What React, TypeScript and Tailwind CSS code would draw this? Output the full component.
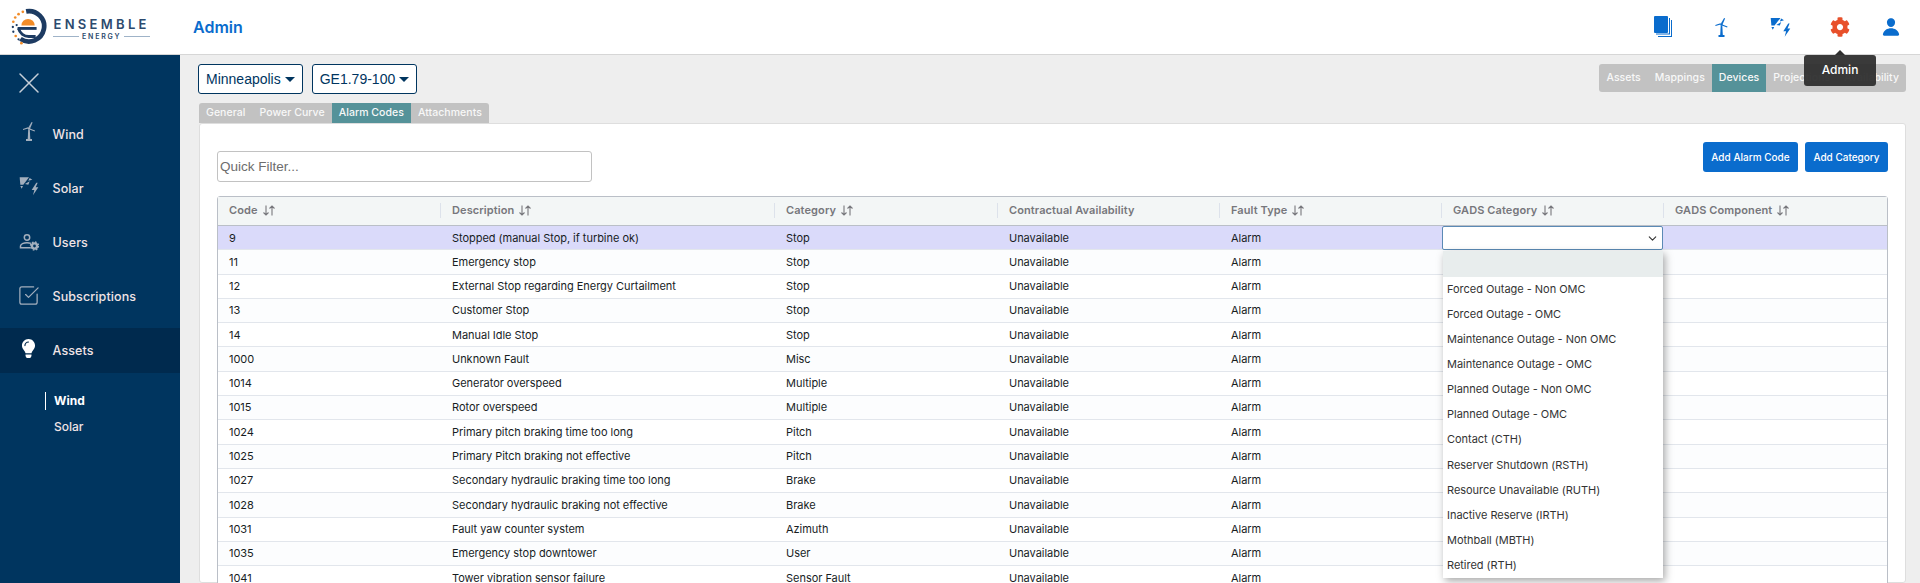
import { ChevronDown, SquareCheckBig, X } from 'lucide-react';
import { FaCog, FaLightbulb } from 'react-icons/fa';
import { IoPerson } from 'react-icons/io5';

const rows = [
  ['9', 'Stopped (manual Stop, if turbine ok)', 'Stop'],
  ['11', 'Emergency stop', 'Stop'],
  ['12', 'External Stop regarding Energy Curtailment', 'Stop'],
  ['13', 'Customer Stop', 'Stop'],
  ['14', 'Manual Idle Stop', 'Stop'],
  ['1000', 'Unknown Fault', 'Misc'],
  ['1014', 'Generator overspeed', 'Multiple'],
  ['1015', 'Rotor overspeed', 'Multiple'],
  ['1024', 'Primary pitch braking time too long', 'Pitch'],
  ['1025', 'Primary Pitch braking not effective', 'Pitch'],
  ['1027', 'Secondary hydraulic braking time too long', 'Brake'],
  ['1028', 'Secondary hydraulic braking not effective', 'Brake'],
  ['1031', 'Fault yaw counter system', 'Azimuth'],
  ['1035', 'Emergency stop downtower', 'User'],
  ['1041', 'Tower vibration sensor failure', 'Sensor Fault'],
];

const columns = ['Code', 'Description', 'Category', 'Contractual Availability', 'Fault Type', 'GADS Category', 'GADS Component'];

const gadsOptions = [
  'Forced Outage - Non OMC',
  'Forced Outage - OMC',
  'Maintenance Outage - Non OMC',
  'Maintenance Outage - OMC',
  'Planned Outage - Non OMC',
  'Planned Outage - OMC',
  'Contact (CTH)',
  'Reserver Shutdown (RSTH)',
  'Resource Unavailable (RUTH)',
  'Inactive Reserve (IRTH)',
  'Mothball (MBTH)',
  'Retired (RTH)',
];

const gridCols = 'grid grid-cols-[222px_334px_223px_222px_222px_222px_1fr]';

function TurbineIcon({ className }: { className?: string }) {
  return (
    <svg viewBox="0 0 12 19" className={className} fill="currentColor">
      <path d="M5.2 7.5h1.6l.5 9.5H4.7z" />
      <path d="M3 17h6v2H3z" />
      <circle cx="6" cy="6.5" r="1.2" />
      <path d="M5.4 5.6 8.6 0l1 .5-2.3 5.6z" />
      <path d="M6.8 6.6 12 8.6l-.4 1-5.2-2z" />
      <path d="M5.2 6.4 0 8l-.2-1L5 5.3z" />
    </svg>
  );
}

function SolarBoltIcon({ className }: { className?: string }) {
  return (
    <svg viewBox="0 0 60 56" className={className} fill="currentColor">
      <path d="M2 2h28L13 24H4z" />
      <path d="M32 4l8 5-12 3zM4 28h8l-4 8zM18 22l14-8-4 10z" />
      <path d="M52 18 38 40h8l-4 16 16-24h-8l6-14z" />
    </svg>
  );
}

function DocsIcon({ className }: { className?: string }) {
  return (
    <svg viewBox="0 0 18 22" className={className} fill="currentColor">
      <rect x="0" y="0" width="14" height="17" rx="1" />
      <path d="M15 2h1v16.5H2v-1h13z" />
      <path d="M17 4h1v17H4v-1h13z" />
    </svg>
  );
}

function UserGearIcon({ className }: { className?: string }) {
  return (
    <svg viewBox="0 0 20 17" className={className} fill="none" stroke="currentColor" strokeWidth="1.5">
      <circle cx="8" cy="3.5" r="2.7" />
      <path d="M12 9.4c-1.2-.4-2.6-.7-4-.7-3.4 0-6.5 1.5-6.5 3.4v1.7H11" />
      <circle cx="15.5" cy="12" r="2.6" strokeWidth="2.4" />
      <circle cx="15.5" cy="12" r="4" strokeWidth="1.5" strokeDasharray="1.6 1.55" />
    </svg>
  );
}

function Logo() {
  return (
    <div className="flex items-center pl-[10px]">
      <svg viewBox="0 0 40 40" className="w-[38px] h-[38px] shrink-0" fill="none">
        <path d="M17 3.5A16 16 0 1 1 11 32.5" stroke="#1d3b62" strokeWidth="5" />
        <path d="M8 21.5h20" stroke="#1d3b62" strokeWidth="3" />
        <path d="M9 21.5A11 11 0 0 0 20 30h7" stroke="#1d3b62" strokeWidth="3" />
        <path d="M12 18.5a7 7 0 0 1 14 0z" fill="#f28c28" />
        <g fill="#f28c28">
          <circle cx="13.5" cy="4" r="1.4" /><circle cx="9" cy="6.5" r="1.4" /><circle cx="5.5" cy="10" r="1.4" />
          <circle cx="3.5" cy="14.5" r="1.4" /><circle cx="6" cy="29.5" r="1.4" /><circle cx="12" cy="37" r="1.4" />
        </g>
        <g fill="#1d3b62">
          <circle cx="3" cy="20" r="1.2" /><circle cx="7" cy="18" r="1.2" /><circle cx="3.5" cy="25" r="1.2" /><circle cx="9" cy="33" r="1.2" />
        </g>
      </svg>
      <div className="ml-[5px] mt-[3px] flex flex-col items-center text-[#2c4a6e]">
        <span className="font-['Inter',sans-serif] text-[13px] leading-[14px] font-semibold tracking-[3.3px] whitespace-nowrap">ENSEMBLE</span>
        <div className="flex items-center gap-[3px] mt-[1px]">
          <span className="w-[26px] h-px bg-[#9fb3c8]" />
          <span className="font-['Inter',sans-serif] text-[7px] leading-[9px] font-semibold tracking-[1.8px]">ENERGY</span>
          <span className="w-[26px] h-px bg-[#9fb3c8]" />
        </div>
      </div>
    </div>
  );
}

function NavItem({ label, icon, active }: { label: string; icon: React.ReactNode; active?: boolean }) {
  return (
    <div className={`flex items-center h-[45px] mb-[9px] ${active ? 'bg-[#002a4e]' : ''}`}>
      <div className={`w-[52.5px] flex justify-center shrink-0 pl-[5px] ${active ? 'text-white' : 'text-[#a3afbd]'}`}>{icon}</div>
      <span className="pt-[2px] text-[12.5px] font-medium text-[#f0e4e6] tracking-[0.1px]">{label}</span>
    </div>
  );
}

function SortArrows() {
  return (
    <svg viewBox="0 0 14 11" className="w-[14px] h-[11px] ml-[4px]" fill="none" stroke="#77777c" strokeWidth="1.1">
      <path d="M4 0.5v9.5M1.5 7.5 4 10l2.5-2.5M10 10.5V1M7.5 3.5 10 1l2.5 2.5" />
    </svg>
  );
}

function Tabs({ items, active, className }: { items: string[]; active: string; className: string }) {
  return (
    <div className={`flex w-fit bg-[#c2c2c2] rounded-[3px] overflow-hidden font-['Inter',sans-serif] text-[10.5px] font-medium tracking-[0.05px] text-[#f8f8f8] whitespace-nowrap ${className}`}>
      {items.map((t) => (
        <div key={t} className={`flex items-center px-[7px] ${t === active ? 'bg-[#559299]' : ''}`}>
          {t}
        </div>
      ))}
    </div>
  );
}

export default function App() {
  return (
    <div className="h-[583px] w-[1920px] overflow-hidden flex flex-col bg-[#eeeeee] font-['Inter',sans-serif]">
      <header className="h-[55px] shrink-0 bg-white border-b border-[#d6d6d6] flex items-center">
        <div className="w-[193px] shrink-0"><Logo /></div>
        <h1 className="text-[16px] leading-none font-semibold text-[#0a6ccd]">Admin</h1>
        <div className="ml-auto flex items-center text-[#0a6ccd] pr-[19px]">
          <DocsIcon className="w-[18px] h-[22px]" />
          <TurbineIcon className="w-[13px] h-[19px] ml-[43px]" />
          <SolarBoltIcon className="w-[21px] h-[20px] ml-[42px]" />
          <div className="relative ml-[39px]">
            <FaCog className="w-[20px] h-[20px] text-[#e8502a]" />
            <div className="absolute z-20 left-1/2 -translate-x-1/2 top-[38px] w-[72px] h-[31px] pb-[1px] rounded-[3px] bg-[#2f2f2f]/95 flex items-center justify-center text-[12px] text-white font-medium">
              <span className="absolute -top-[5px] left-1/2 -translate-x-1/2 w-0 h-0 border-l-[5px] border-r-[5px] border-b-[5px] border-l-transparent border-r-transparent border-b-[#2f2f2f]" />
              Admin
            </div>
          </div>
          <IoPerson className="w-[20px] h-[20px] ml-[31px]" />
        </div>
      </header>

      <div className="flex flex-1 min-h-0">
        <aside className="w-[180px] shrink-0 bg-[#00355f]">
          <div className="h-[55px] flex items-center pl-[11px]">
            <X className="w-[36px] h-[36px] text-[#c6ced8]" strokeWidth={1} />
          </div>
          <div className="pt-[2px]">
            <NavItem label="Wind" icon={<TurbineIcon className="w-[12px] h-[19px] mb-[6px]" />} />
            <NavItem label="Solar" icon={<SolarBoltIcon className="w-[20px] h-[20px] mb-[6px]" />} />
            <NavItem label="Users" icon={<UserGearIcon className="w-[20px] h-[17px] mb-[1px]" />} />
            <NavItem label="Subscriptions" icon={<SquareCheckBig className="w-[23px] h-[23px] mb-[3px]" strokeWidth={1.3} />} />
            <NavItem label="Assets" active icon={<FaLightbulb className="w-[19px] h-[19px] mb-[4px]" />} />
          </div>
          <div className="pl-[45px] mt-[10px] pt-[9px] text-[12px]">
            <div className="h-[18px] border-l border-white pl-[8px] flex items-center font-bold text-white">Wind</div>
            <div className="pl-[9px] mt-[9px] leading-[16px] font-medium text-[#f0e4e6]">Solar</div>
          </div>
        </aside>

        <main className="flex-1 min-w-0 pl-[18px] pr-[14px] pt-[9px]">
          <div className="flex items-start justify-between h-[39px]">
            <div className="flex gap-[9px] font-['Liberation_Sans',sans-serif] text-[14px] text-[#00355f]">
              {['Minneapolis', 'GE1.79-100'].map((v) => (
                <div key={v} className="h-[30px] px-[7px] flex items-center gap-[4px] bg-white border border-[#00355f] rounded-[3px]">
                  {v}
                  <span className="w-0 h-0 mt-[1px] border-l-[5px] border-r-[5px] border-t-[5px] border-l-transparent border-r-transparent border-t-[#00355f]" />
                </div>
              ))}
            </div>
            <Tabs className="h-[28px]" items={['Assets', 'Mappings', 'Devices', 'Projections', 'Availability']} active="Devices" />
          </div>

          <Tabs className="h-[20px] ml-[1px] rounded-b-none" items={['General', 'Power Curve', 'Alarm Codes', 'Attachments']} active="Alarm Codes" />

          <section className="ml-[1px] bg-white border border-[#dedede] rounded-[3px] h-[460px] pt-[27px] px-[17px]">
            <div className="flex items-start justify-between">
              <input
                placeholder="Quick Filter..."
                className="w-[375px] h-[31px] px-[2px] rounded-[3px] border border-[#c2c2c2] bg-white text-[13.5px] placeholder:text-[#6d6d6d] font-['Liberation_Sans',sans-serif]"
              />
              <div className="flex gap-[7px] -mt-[9px] text-[10px] font-medium text-white whitespace-nowrap">
                <div className="h-[30px] w-[95px] rounded-[3px] bg-[#0a6ccd] flex items-center justify-center">Add Alarm Code</div>
                <div className="h-[30px] w-[83px] rounded-[3px] bg-[#0a6ccd] flex items-center justify-center">Add Category</div>
              </div>
            </div>

            <div className="mt-[14px] border border-[#babfc7] rounded-t-[3px] text-[11px] tracking-[-0.03px] text-[#181d1f] relative">
              <div className={`${gridCols} h-[29px] pb-[1px] bg-[#f3f6f6] border-b border-[#babfc7] font-semibold tracking-[0.1px] text-[#77777c]`}>
                {columns.map((c, i) => (
                  <div key={c} className="flex items-center">
                    {i > 0 && <span className="w-px h-[15px] bg-[#dde2eb] mr-[11px]" />}
                    <span className={i === 0 ? 'pl-[11px]' : ''}>{c}</span>
                    {c !== 'Contractual Availability' && <SortArrows />}
                  </div>
                ))}
              </div>
              {rows.map((r, i) => (
                <div
                  key={r[0]}
                  className={`${gridCols} h-[24.3px] items-center border-b border-[#e2e6ec] ${i === 0 ? 'bg-[#dadafa]' : i % 2 ? 'bg-[#fcfdfe]' : 'bg-white'}`}
                >
                  <div className="pl-[11px]">{r[0]}</div>
                  <div className="pl-[12px]">{r[1]}</div>
                  <div className="pl-[12px]">{r[2]}</div>
                  <div className="pl-[12px]">Unavailable</div>
                  <div className="pl-[12px]">Alarm</div>
                  <div className="h-full">
                    {i === 0 && (
                      <div className="h-[24px] ml-[1px] flex items-center justify-end pr-[3px] bg-white border border-[#5b8ab5] rounded-[2px]">
                        <ChevronDown className="w-[13px] h-[13px] text-[#333333]" />
                      </div>
                    )}
                  </div>
                  <div />
                </div>
              ))}
              <div className="absolute z-10 left-[1225px] top-[54px] w-[220px] bg-white shadow-[2px_3px_8px_rgba(0,0,0,0.35)] text-[#333]">
                <div className="h-[25.6px] bg-[#e8eded]" />
                {gadsOptions.map((o) => (
                  <div key={o} className="h-[25.1px] flex items-center pl-[4px]">{o}</div>
                ))}
              </div>
            </div>
          </section>
        </main>
      </div>
    </div>
  );
}
